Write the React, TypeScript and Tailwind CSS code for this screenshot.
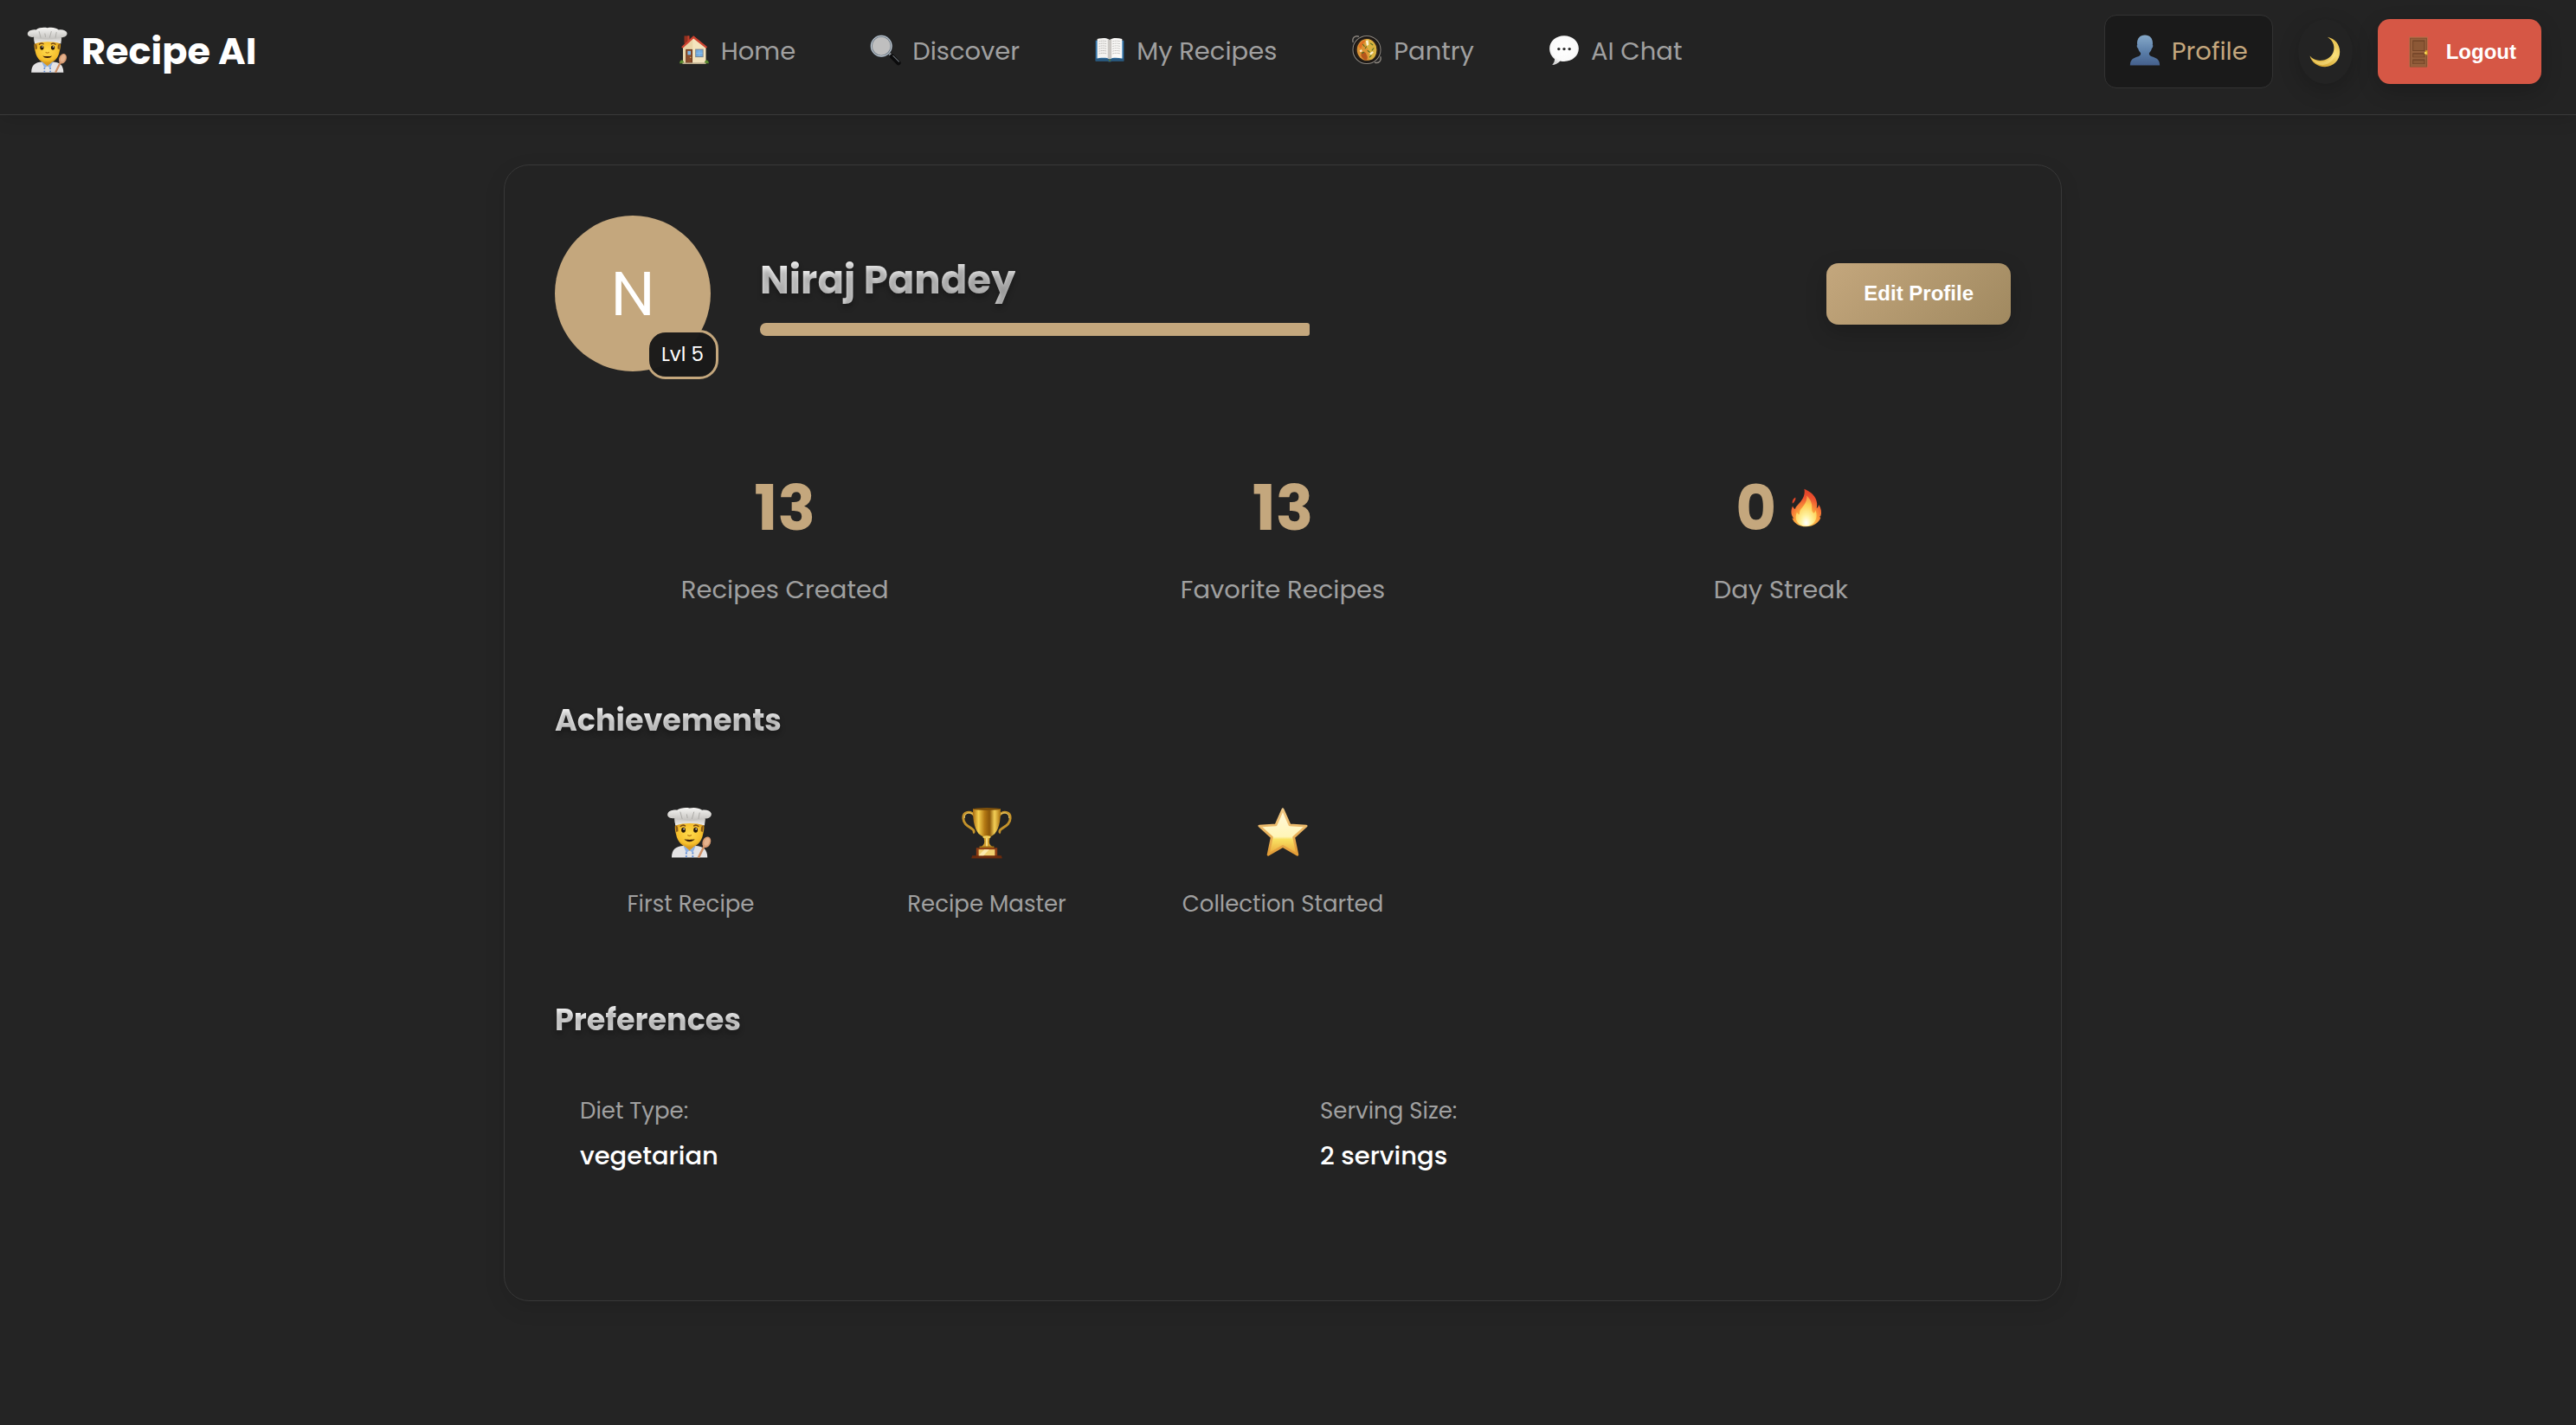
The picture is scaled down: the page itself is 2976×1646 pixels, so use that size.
import React from "react";

type IconProps = { className?: string };

function ChefIcon({ className }: IconProps) {
  return (
    <svg viewBox="0 0 64 64" className={className} aria-hidden="true">
      <defs>
        <linearGradient id="chefHat" x1="0" y1="0" x2="0" y2="1">
          <stop offset="0" stopColor="#f6f5f3" />
          <stop offset="1" stopColor="#b9b7b3" />
        </linearGradient>
        <linearGradient id="chefBand" x1="0" y1="0" x2="0" y2="1">
          <stop offset="0" stopColor="#c9c7c3" />
          <stop offset="1" stopColor="#efeeec" />
        </linearGradient>
        <radialGradient id="chefFace" cx=".5" cy=".45" r=".6">
          <stop offset="0" stopColor="#ffdb4d" />
          <stop offset=".7" stopColor="#f5bf2c" />
          <stop offset="1" stopColor="#d08e16" />
        </radialGradient>
      </defs>
      <path d="M8.500 62.500C8.500 52 14 48.500 23 48h15c9 .5 14.500 4 14.500 14.500z" fill="#e4e3e4" />
      <path d="M24 42h13v7c-2 3.500-4.500 5-6.500 5S26 52.500 24 49z" fill="#d9981f" />
      <path d="M22.500 47l8 6.500-4 3zM38.500 47l-8 6.500 4 3z" fill="#8fb2e4" />
      <path d="M26.500 56v6.500M34.500 56v6.500" stroke="#5c8bd6" strokeWidth="2" strokeDasharray="2 2" />
      <path d="M12.500 24c0 4 .6 7 1.500 10 1.500 9 8 15.500 16.500 15.500S45.500 43 47 34c.9-3 1.500-6 1.500-10l-3-4h-30z" fill="url(#chefFace)" />
      <path d="M13.500 23c2 .5 3 2 3 7l-2.500 1zM47.500 23c-2 .5-3 2-3 7l2.500 1z" fill="#8a5a16" />
      <path d="M19.500 24c2-1.800 4-1.800 5.500-.6M36 23.400c1.500-1.200 3.500-1.200 5.500.6" stroke="#7a4a12" strokeWidth="1.600" fill="none" strokeLinecap="round" />
      <ellipse cx="23" cy="28.500" rx="2.600" ry="3.100" fill="#241606" />
      <ellipse cx="38" cy="28.500" rx="2.600" ry="3.100" fill="#241606" />
      <circle cx="23.600" cy="27.300" r=".9" fill="#fff" />
      <circle cx="38.600" cy="27.300" r=".9" fill="#fff" />
      <path d="M28.500 35c1.300 1 2.700 1 4 0" stroke="#c07f14" strokeWidth="1.500" fill="none" strokeLinecap="round" />
      <path d="M24 39.800c2 .8 11 .8 13 0-1.500 2-3.500 3-6.500 3s-5-1-6.500-3z" fill="#3a1d08" />
      <path d="M12 14C5 15 2 11 4 7.500 6 4 12 3.500 15 4c4-3 11-3.500 15.500-2.500C36 .3 42 1 46 4c5-.8 10 .5 11.300 4 1 4-3 6.500-7.800 6.500L49 20H12.500z" fill="url(#chefHat)" />
      <path d="M19 6l2.500 9M27 9l1 5M36 6l-2.500 9M43 7l-1.500 8" stroke="#a9a7a3" strokeWidth="1" fill="none" />
      <path d="M12 14.500c12 3.500 26 3.500 38 0l-1 8.500c-11-3.500-25-3.500-36 0z" fill="url(#chefBand)" />
      <path d="M48.500 48.500L41.500 62.500" stroke="#cf8f63" strokeWidth="2.600" />
      <ellipse cx="51.500" cy="43.500" rx="5" ry="7" transform="rotate(22 51.500 43.500)" fill="#d79a72" />
      <ellipse cx="51.800" cy="43" rx="3" ry="5" transform="rotate(22 51.800 43)" fill="#e5b28d" />
    </svg>
  );
}

function HouseIcon({ className }: IconProps) {
  return (
    <svg viewBox="0 0 64 64" className={className} aria-hidden="true">
      <path d="M11.500 2.500h10.500v16h-10.500z" fill="#93301f" />
      <path d="M18.500 2.500h3.500v16h-3.500z" fill="#c2412d" />
      <path d="M9 59V24L31 4l25 20v35z" fill="#f3e3bd" />
      <path d="M9 24L31 5l-2 3v51H9z" fill="#e9d5a8" />
      <path d="M30.500 2L5.500 25.500l3 2.500L30.500 8 56 28l3-2.500z" fill="#cf4431" />
      <path d="M14.500 30h14v29h-14z" fill="#6e3a20" />
      <path d="M16.500 32h10v25h-10z" fill="#8b4c2b" />
      <path d="M18.500 33.500h6.500v8h-6.500z" fill="#7db6e6" />
      <circle cx="24.500" cy="47" r="1.200" fill="#e3bb59" />
      <path d="M34 29.500h17v17H34z" fill="#7b8894" />
      <path d="M36 31.500h13v13H36z" fill="#6fa9e0" />
      <path d="M42.500 31.500v13M36 38h13" stroke="#9cc8ef" strokeWidth="1" />
      <path d="M2 59c0-4 2-6.500 4.500-6.500S11 55 11 59zM53 59c0-4 2-6.500 4.500-6.500S62 55 62 59z" fill="#5b8a2f" />
      <path d="M8 57.500h48v3H8z" fill="#b7a98c" />
    </svg>
  );
}

function SearchGlassIcon({ className }: IconProps) {
  return (
    <svg viewBox="0 0 64 64" className={className} aria-hidden="true">
      <path d="M40 39L45 44" stroke="#9aa3ab" strokeWidth="5" />
      <path d="M45.500 44.500L58.500 58" stroke="#0b0b0c" strokeWidth="9.500" strokeLinecap="round" />
      <path d="M47.500 43.500L59.500 55.500" stroke="#6c7278" strokeWidth="1.800" strokeLinecap="round" />
      <circle cx="23.500" cy="23.500" r="20.500" fill="#bfbfbf" stroke="#6f7a85" strokeWidth="4" />
      <circle cx="23.500" cy="23.500" r="21" fill="none" stroke="#dfe9f2" strokeWidth="1.400" />
    </svg>
  );
}

function BookIcon({ className }: IconProps) {
  return (
    <svg viewBox="0 0 64 64" className={className} aria-hidden="true">
      <path d="M3 12h58v42H36c-1 2-7 2-8 0H3z" fill="#3577ac" />
      <path d="M3 49h58v5H36c-1 2-7 2-8 0H3z" fill="#28587f" />
      <path d="M6.500 9C15 6.500 27 6 31.500 11v39C26 46.500 15 47 6.500 49z" fill="#f4f3f1" />
      <path d="M57.500 9C49 6.500 37 6 32.500 11v39C38 46.500 49 47 57.500 49z" fill="#fbfaf8" />
      <path d="M28 8.500c2 .6 3 1.400 4 2.700v39c-1-1-2.500-1.800-4-2.200zM36 8.500c-2 .6-3 1.400-4 2.700v39c1-1 2.500-1.800 4-2.200z" fill="#c9c6c2" />
      <path d="M10 14c6-1.500 11-1.500 16 0M10 19c6-1.500 11-1.500 16 0M10 24c6-1.500 11-1.500 16 0M10 29c6-1.500 11-1.500 16 0M10 34c6-1.500 11-1.500 16 0M10 39c6-1.500 11-1.500 16 0M38 14c5-1.500 10-1.500 16 0M38 19c5-1.500 10-1.500 16 0M38 24c5-1.500 10-1.500 16 0M38 29c5-1.500 10-1.500 16 0M38 34c5-1.500 10-1.500 16 0M38 39c5-1.500 10-1.500 16 0" stroke="#a9a6a3" strokeWidth="1.300" strokeDasharray="3 1" fill="none" />
      <path d="M29 51h6l-3 4z" fill="#5b7a35" />
    </svg>
  );
}

function PanIcon({ className }: IconProps) {
  return (
    <svg viewBox="0 0 64 64" className={className} aria-hidden="true">
      <path d="M4 16C1 7 8 1 16 4M60 45c3 9-4 15-12 12" fill="none" stroke="#8d8780" strokeWidth="2.400" />
      <circle cx="32" cy="31" r="28.500" fill="#1b1714" stroke="#8d8780" strokeWidth="1.800" />
      <circle cx="32" cy="31" r="24" fill="#2e241c" />
      <ellipse cx="32" cy="31" rx="20" ry="22" fill="#dd9433" />
      <path d="M31 9c12 0 21 10 21 22S46 52 38 52c-5-8 1-14-3-22s-9-10-4-21z" fill="#d9b13f" />
      <path d="M15 24c4-9 9-12 14-12-2 6-6 6-7 12s-3 5-7 0z" fill="#e06f22" />
      <path d="M20 42c2-8 8-8 11-2s3 10 0 12c-5 0-9-4-11-10z" fill="#b5561c" />
      <path d="M30 13l5-2 1 10-4 2zM38 38l6-4 2 3-6 5zM17 33l4-3 2 4-4 2z" fill="#fbf0cf" />
      <path d="M24 20l3 4M40 18l4 3M46 28l-3 4M34 33l4 3M26 36l-4 2M38 46l3-3M29 28l2-3" stroke="#4f6a24" strokeWidth="2" strokeLinecap="round" />
    </svg>
  );
}

function SpeechIcon({ className }: IconProps) {
  return (
    <svg viewBox="0 0 64 64" className={className} aria-hidden="true">
      <defs>
        <radialGradient id="speechFill" cx=".5" cy=".4" r=".6">
          <stop offset="0" stopColor="#ffffff" />
          <stop offset=".75" stopColor="#fafafa" />
          <stop offset="1" stopColor="#d2d2d2" />
        </radialGradient>
      </defs>
      <path d="M32 2c17 0 30 11.500 30 26.500S49 55 32 55c-3 0-5.500-.3-8-.9C20 59 13 62 7.500 62 11 58 12.500 54 12.500 50 6 45 2 37.500 2 28.500 2 13.500 15 2 32 2z" fill="url(#speechFill)" />
      <circle cx="21" cy="29.500" r="3" fill="#2c2c2c" />
      <circle cx="32" cy="29.500" r="3" fill="#2c2c2c" />
      <circle cx="43" cy="29.500" r="3" fill="#2c2c2c" />
    </svg>
  );
}

function PersonIcon({ className }: IconProps) {
  return (
    <svg viewBox="0 0 64 64" className={className} aria-hidden="true">
      <defs>
        <linearGradient id="personFill" x1="0" y1="0" x2="0" y2="1">
          <stop offset="0" stopColor="#86a9c9" />
          <stop offset=".6" stopColor="#587ba6" />
          <stop offset="1" stopColor="#45608c" />
        </linearGradient>
      </defs>
      <path d="M32 1c10.500 0 16 7 16 17 0 .8-.2 1.800-.4 2.700 1.600.5 1 6-1.400 7.500-1.200 4.500-3 7.300-5.400 9.600-.6 3.200.6 5.500 5 7C54 48 62 48.500 62.500 63h-61C2 48.500 10 48 18.200 44.800c4.400-1.500 5.600-3.800 5-7-2.400-2.300-4.200-5.100-5.400-9.600-2.400-1.500-3-7-1.400-7.500-.2-.9-.4-1.900-.4-2.700C16 8 21.500 1 32 1z" fill="url(#personFill)" />
    </svg>
  );
}

function MoonIcon({ className }: IconProps) {
  return (
    <svg viewBox="0 0 64 64" className={className} aria-hidden="true">
      <defs>
        <linearGradient id="moonFill" x1=".8" y1="0" x2=".5" y2="1">
          <stop offset="0" stopColor="#e7bf4b" />
          <stop offset=".55" stopColor="#f7dc74" />
          <stop offset="1" stopColor="#d9aa35" />
        </linearGradient>
      </defs>
      <path d="M37 1.500C53 4.500 62.500 17 62.500 32c0 17-13.500 30.500-30.500 30.500C16 62.500 4 53 1 40c6 7.500 15 10.500 25 9.500C40 47.500 51 37 50.500 23 50.300 14.500 45.500 6.500 37 1.500z" fill="url(#moonFill)" />
      <path d="M4 44c6 6.500 14 9.500 23 8.500C42 50.500 54 40 54.500 24c4 15-8 33-27 35C18 59.500 9 53 4 44z" fill="#fbe88f" opacity=".5" />
    </svg>
  );
}

function DoorIcon({ className }: IconProps) {
  return (
    <svg viewBox="0 0 64 64" className={className} aria-hidden="true">
      <path d="M13 1h38v62H13z" fill="#b4714b" />
      <path d="M14.500 3h35v60h-35z" fill="#7d4a2c" />
      <path d="M16 4.500h32V62H16z" fill="#96603d" />
      <path d="M20 8h25v22H20zM20 34h25v9H20zM20 47h25v10H20z" fill="#6d3f24" />
      <path d="M21.500 10h22v19h-22zM21.500 36.500h22V42h-22zM21.500 49.500h22V56h-22z" fill="#8c5836" />
      <path d="M46 29h4.500v9H46z" fill="#d9a92a" />
      <circle cx="46.500" cy="34" r="2.200" fill="#ffe25e" />
    </svg>
  );
}

function FireIcon({ className }: IconProps) {
  return (
    <svg viewBox="0 0 64 64" className={className} aria-hidden="true">
      <defs>
        <radialGradient id="fireOuter" cx=".5" cy=".9" r=".95">
          <stop offset="0" stopColor="#ffe06a" />
          <stop offset=".4" stopColor="#fba13c" />
          <stop offset=".7" stopColor="#ee5330" />
          <stop offset="1" stopColor="#d83a22" />
        </radialGradient>
        <radialGradient id="fireInner" cx=".5" cy=".9" r=".85">
          <stop offset="0" stopColor="#ffffff" />
          <stop offset=".3" stopColor="#fff3a0" />
          <stop offset=".7" stopColor="#fdd055" />
          <stop offset="1" stopColor="#f59a45" />
        </radialGradient>
      </defs>
      <path d="M29 1c10 4 20 12 21 24 .2 3-.2 6-.6 8 2-1.500 3.300-4 3.600-6 4 6 5 13 3 19l-2 .5 2 2C53 57 44 63 32 63S12 57 9 49l3 .5C7 44 6.500 37 10 29c1 2.500 2 4 4 5 1-4 4-6 6.500-9C27 18 31 10 29 1z" fill="url(#fireOuter)" />
      <path d="M14.500 15c1 4-.8 5-1.800 7-.7 1.400-2 2.500-3.200 2.800C9 20 11 17.500 14.500 15z" fill="#e04627" />
      <path d="M33 12c8 8 9 14 8.500 21-.2 4 1 7 3.500 8 1.500-1.200 2.200-2.600 2.500-5 5 12-1 26-15.500 26S12 50 17 39c.8 2 1.800 3.500 4 4 .2-7 3-9 6-13 4-5.500 7-11 6-18z" fill="url(#fireInner)" />
    </svg>
  );
}

function TrophyIcon({ className }: IconProps) {
  return (
    <svg viewBox="0 0 64 64" className={className} aria-hidden="true">
      <defs>
        <linearGradient id="cupFill" x1="0" y1="0" x2="1" y2="0">
          <stop offset="0" stopColor="#a86a10" />
          <stop offset=".2" stopColor="#f6d04e" />
          <stop offset=".42" stopColor="#b47a14" />
          <stop offset=".6" stopColor="#8a5609" />
          <stop offset=".78" stopColor="#f3cf57" />
          <stop offset="1" stopColor="#a8700f" />
        </linearGradient>
      </defs>
      <path d="M17 11C12 4 2.500 6 3 14c.4 8 7 10 11.500 13.500 2 1.600 2.500 3.500.5 4.500M47 11c5-7 14.500-5 14 3-.4 8-7 10-11.500 13.500-2 1.600-2.500 3.500-.5 4.500" fill="none" stroke="#c4922a" strokeWidth="3" />
      <path d="M16.500 10.500C12 5 4 7 4.500 14M47.500 10.500C52 5 60 7 59.500 14" fill="none" stroke="#f5d570" strokeWidth="1" />
      <path d="M15 2h34c.5 16-2.500 28-9.500 33-2 1.500-4 2-7.500 2s-5.500-.5-7.500-2C17.500 30 14.500 18 15 2z" fill="url(#cupFill)" />
      <ellipse cx="32" cy="2.600" rx="17" ry="1.600" fill="#7d500c" />
      <path d="M28 36h8l-.8 5c-.8 4 .8 6 4 8.500H24.800c3.200-2.500 4.800-4.500 4-8.500z" fill="#d3a02f" />
      <path d="M31 37h2v12h-2z" fill="#f8df85" />
      <ellipse cx="32" cy="37" rx="5" ry="1.600" fill="#f2cf5a" />
      <path d="M23 48.500h18v3H23z" fill="#a26f14" />
      <path d="M19 50.500h26V61H19z" fill="#8d3c14" />
      <path d="M14 60h36l1 3.500H13z" fill="#6b2a0d" />
      <path d="M22 52.500h20v7.500H22z" fill="#f0d070" />
      <path d="M22 60l7-7.500h6L28 60z" fill="#fbeaaf" />
    </svg>
  );
}

function StarIcon({ className }: IconProps) {
  return (
    <svg viewBox="0 0 64 64" className={className} aria-hidden="true">
      <defs>
        <linearGradient id="starFill" x1="0" y1="0" x2="0" y2="1">
          <stop offset="0" stopColor="#fff8dc" />
          <stop offset=".6" stopColor="#fff5b8" />
          <stop offset=".66" stopColor="#f9e263" />
          <stop offset="1" stopColor="#eaa53a" />
        </linearGradient>
        <linearGradient id="starEdge" x1="0" y1="0" x2="0" y2="1">
          <stop offset="0" stopColor="#f0c987" />
          <stop offset="1" stopColor="#e29c35" />
        </linearGradient>
      </defs>
      <path d="M32 3l8.500 19.300 20.500 1.200-15.500 14 4.500 21.500-18-10.500L14 59l4.500-21.500L3 23.500l20.500-1.200z" fill="url(#starFill)" stroke="url(#starEdge)" strokeWidth="3" strokeLinejoin="round" />
    </svg>
  );
}

const navLinks = [
  { label: "Home", Icon: HouseIcon },
  { label: "Discover", Icon: SearchGlassIcon },
  { label: "My Recipes", Icon: BookIcon },
  { label: "Pantry", Icon: PanIcon },
  { label: "AI Chat", Icon: SpeechIcon },
];

const stats = [
  { value: "13", label: "Recipes Created", streak: false },
  { value: "13", label: "Favorite Recipes", streak: false },
  { value: "0", label: "Day Streak", streak: true },
];

const achievements = [
  { label: "First Recipe", Icon: ChefIcon },
  { label: "Recipe Master", Icon: TrophyIcon },
  { label: "Collection Started", Icon: StarIcon },
];

const preferences = [
  { label: "Diet Type:", value: "vegetarian" },
  { label: "Serving Size:", value: "2 servings" },
];

function Header() {
  return (
    <header className="flex items-start justify-between border-b border-[#3a3a3a] bg-[#232323] pt-[17px] pr-10 pb-[30px] pl-[29px] shadow-[0_4px_20px_rgba(0,0,0,0.12)]">
      <a href="#" className="flex h-[85px] items-center gap-[11px] text-[43px] font-bold text-white">
        <ChefIcon className="mb-1 size-[54px]" />
        Recipe AI
      </a>
      <nav className="flex h-[85px] items-center gap-[86px]">
        {navLinks.map(({ label, Icon }) => (
          <a key={label} href="#" className="flex items-center gap-[13px] text-[29px] text-[#a0a0a0]">
            <Icon className="mb-1 size-9" />
            {label}
          </a>
        ))}
      </nav>
      <div className="flex h-[85px] items-center gap-[29px]">
        <a
          href="#"
          className="flex h-full items-center gap-[13px] rounded-[14px] border border-[#333333] bg-[#1a1a1a] px-7 text-[29px] text-[#c4a77d]"
        >
          <PersonIcon className="mb-1 size-9" />
          Profile
        </a>
        <button
          type="button"
          aria-label="Toggle theme"
          className="flex h-[75px] w-[63px] items-center justify-center rounded-[50%] bg-[#232323] shadow-[0_8px_24px_rgba(0,0,0,0.2)]"
        >
          <MoonIcon className="size-9" />
        </button>
        <button
          type="button"
          className="flex h-[75px] items-center gap-[14px] rounded-[14px] bg-[#d65745] px-[29px] font-['Liberation_Sans',Arial,sans-serif] text-2xl font-bold text-white shadow-[0_8px_24px_rgba(0,0,0,0.2)]"
        >
          <DoorIcon className="size-9" />
          Logout
        </button>
      </div>
    </header>
  );
}

function SectionTitle({ children }: { children: React.ReactNode }) {
  return (
    <h3 className="w-fit bg-linear-135 from-[#fafafa] to-[#e6e6e6] bg-clip-text text-[35px] leading-[56px] font-bold text-transparent [text-shadow:0_4px_6px_rgba(0,0,0,0.3)]">
      {children}
    </h3>
  );
}

export default function App() {
  const progress = 54;
  return (
    <div className="min-h-screen bg-[#242424] font-['Poppins','Inter',sans-serif] text-white">
      <Header />
      <main className="pt-[57px] pr-[41px] pb-[57px] pl-[29px]">
        <section className="mx-auto max-w-[1800px] rounded-[29px] border border-[#383838] bg-[#232323] px-[58px] pt-[58px] pb-[115px] shadow-[0_8px_24px_rgba(0,0,0,0.1)]">
          <div className="flex items-center gap-[57px]">
            <div className="relative flex size-[180px] shrink-0 items-center justify-center rounded-full bg-[#c4a77d] text-[72px]">
              N
              <span className="absolute -right-[9px] -bottom-[9px] rounded-[22px] border-[3px] border-[#c4a77d] bg-[#1a1a1a]/98 px-[14px] py-[7px] text-[23px] leading-[37px]">
                Lvl 5
              </span>
            </div>
            <div className="flex-1">
              <h2 className="mb-4 w-fit bg-linear-135 from-[#f8f8f8] to-[#d4d4d4] bg-clip-text text-[45px] leading-[67px] font-bold text-transparent [text-shadow:0_4px_6px_rgba(0,0,0,0.3)]">
                Niraj Pandey
              </h2>
              <div role="progressbar" aria-label="Level progress" aria-valuenow={progress} className="h-[15px] overflow-hidden rounded-[7px]">
                <div className="h-full rounded-r-[3px] bg-[#c4a77d]" style={{ width: `${progress}%` }} />
              </div>
            </div>
            <button
              type="button"
              className="h-[71px] rounded-[14px] bg-linear-135 from-[#c4a77d] to-[#a08960] px-[43px] font-['Liberation_Sans',Arial,sans-serif] text-2xl font-bold shadow-[0_8px_24px_rgba(0,0,0,0.2)]"
            >
              Edit Profile
            </button>
          </div>

          <div className="mt-[57px] grid grid-cols-3 gap-11">
            {stats.map(({ value, label, streak }) => (
              <div key={label} className="flex flex-col items-center gap-[14px] py-[43px]">
                <div className="flex items-center gap-3 text-[72px] leading-[115px] font-bold text-[#c4a77d]">
                  {value}
                  {streak && <FireIcon className="size-[45px]" />}
                </div>
                <div className="text-[29px] leading-[46px] text-[#a0a0a0]">{label}</div>
              </div>
            ))}
          </div>

          <div className="mt-[57px]">
            <SectionTitle>Achievements</SectionTitle>
            <ul className="mt-[58px] grid grid-cols-5 gap-7">
              {achievements.map(({ label, Icon }) => (
                <li key={label} className="flex flex-col items-center gap-[31px] pt-[14px] pb-7">
                  <Icon className="size-[60px]" />
                  <span className="text-[26px] leading-[42px] text-[#a0a0a0]">{label}</span>
                </li>
              ))}
            </ul>
          </div>

          <div className="mt-[57px]">
            <SectionTitle>Preferences</SectionTitle>
            <dl className="mt-[27px] grid grid-cols-2 gap-7">
              {preferences.map(({ label, value }) => (
                <div key={label} className="flex flex-col gap-2 p-[29px]">
                  <dt className="text-[26px] leading-[42px] text-[#a0a0a0]">{label}</dt>
                  <dd className="text-[29px] leading-[46px] font-medium">{value}</dd>
                </div>
              ))}
            </dl>
          </div>
        </section>
      </main>
    </div>
  );
}
